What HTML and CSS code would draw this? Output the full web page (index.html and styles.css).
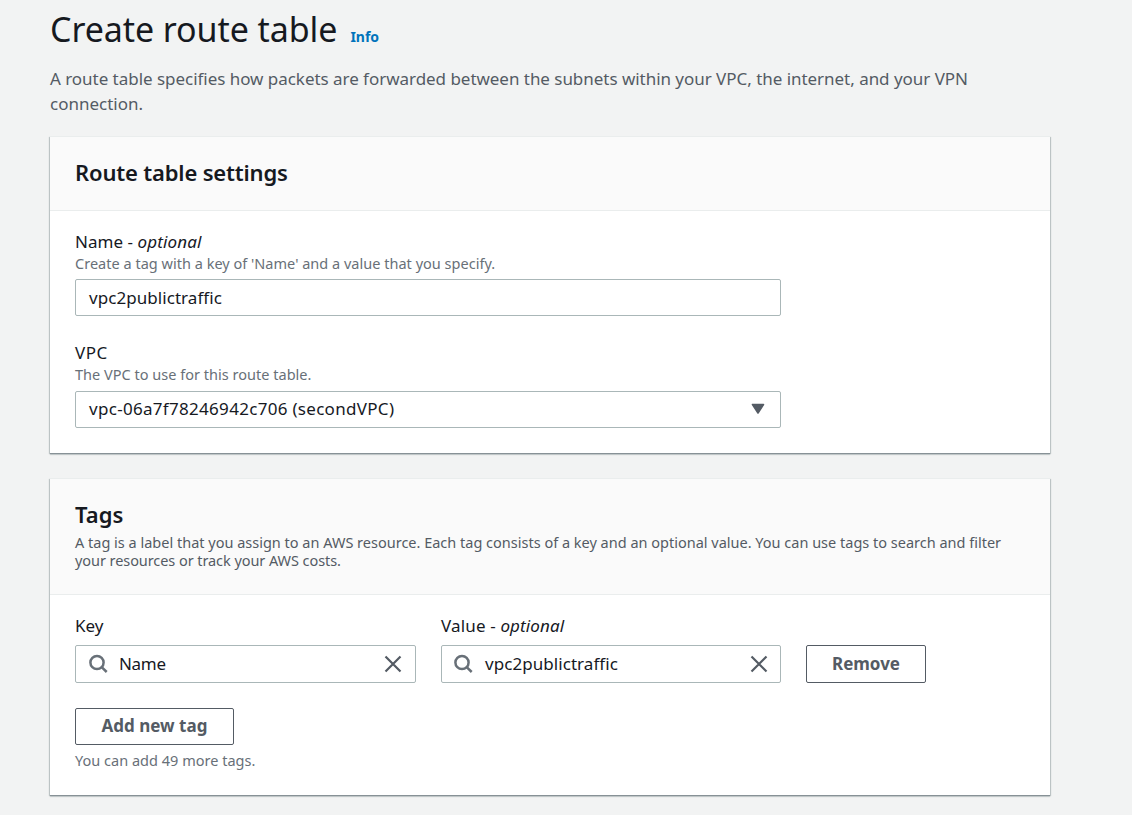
FILE: index.html
```html
<!DOCTYPE html>
<html lang="en">
<head>
<meta charset="utf-8">
<title>Create route table</title>
<link rel="stylesheet" href="styles.css">
</head>
<body>
<main class="page">
  <header class="page-header">
    <div class="title-row"><h1 class="title"><span>Create route table</span></h1><a class="info"><span>Info</span></a></div>
    <p class="intro"><span class="intro-first">A route table specifies how packets are forwarded between the subnets within your VPC, the internet, and your VPN</span><br><span>connection.</span></p>
  </header>

  <section class="card settings">
    <div class="card-header"><h2 class="heading"><span>Route table settings</span></h2></div>
    <div class="card-body">
      <div class="field">
        <label class="label optional"><span>Name - <i>optional</i></span></label>
        <p class="hint"><span>Create a tag with a key of 'Name' and a value that you specify.</span></p>
        <div class="control"><span class="value traffic">vpc2publictraffic</span></div>
      </div>
      <div class="field">
        <label class="label vpc"><span>VPC</span></label>
        <p class="hint"><span>The VPC to use for this route table.</span></p>
        <div class="control select"><span class="value vpc-id">vpc-06a7f78246942c706 (secondVPC)</span>
          <svg class="caret" viewBox="0 0 14 12"><path d="M1.5 1.5h11L7 10z" fill="#545b64" stroke="#545b64" stroke-width="1.6" stroke-linejoin="round"/></svg>
        </div>
      </div>
    </div>
  </section>

  <section class="card tags">
    <div class="card-header">
      <h2 class="heading"><span>Tags</span></h2>
      <p class="description"><span>A tag is a label that you assign to an AWS resource. Each tag consists of a key and an optional value. You can use tags to search and filter</span><br><span class="description-last">your resources or track your AWS costs.</span></p>
    </div>
    <div class="card-body">
      <div class="tag-row">
        <div class="tag-field">
          <label class="label"><span>Key</span></label>
          <div class="control search">
            <svg class="lens" viewBox="0 0 20 20"><circle cx="9" cy="8.5" r="6.6"/><path d="M13.7 13.2l5 4.8"/></svg>
            <span class="value name">Name</span>
            <svg class="clear" viewBox="0 0 18 18"><path d="M1.5 1.5l15 15M16.5 1.5l-15 15"/></svg>
          </div>
        </div>
        <div class="tag-field">
          <label class="label optional tag-value"><span>Value - <i>optional</i></span></label>
          <div class="control search">
            <svg class="lens" viewBox="0 0 20 20"><circle cx="9" cy="8.5" r="6.6"/><path d="M13.7 13.2l5 4.8"/></svg>
            <span class="value traffic">vpc2publictraffic</span>
            <svg class="clear" viewBox="0 0 18 18"><path d="M1.5 1.5l15 15M16.5 1.5l-15 15"/></svg>
          </div>
        </div>
        <button class="button remove"><span>Remove</span></button>
      </div>
      <button class="button add"><span>Add new tag</span></button>
      <p class="hint limit"><span>You can add 49 more tags.</span></p>
    </div>
  </section>
</main>
</body>
</html>
```
FILE: styles.css
```css
* { box-sizing: border-box; margin: 0; padding: 0; }
body { background: #f2f3f3; color: #16191f; font-family: "Noto Sans", sans-serif; font-size: 17px; line-height: 25px; }
.page { width: 1132px; height: 815px; padding: 7px 81px 0 50px; overflow: hidden; white-space: nowrap; }
.page-header { height: 129px; }
.title-row { display: flex; align-items: baseline; gap: 13px; height: 59px; }
.title { font-size: 34px; font-weight: 400; line-height: 44px; letter-spacing: -.08px; }
.info { color: #0073bb; font-size: 14px; font-weight: 700; }
.intro { color: #545b64; }
.intro-first { letter-spacing: -.035px; }

.card { background: #fff; box-shadow: 0 1px 0 0 #879196, 0 2px 1px 0 rgba(0,28,36,.15), 1px 1px 1px 0 rgba(0,28,36,.2), -1px 1px 1px 0 rgba(0,28,36,.2); border-top: 1px solid #eaeded; width: 1000px; }
.settings { height: 317px; margin-bottom: 25px; }
.tags { height: 317px; }
.card-header { background: #fafafa; border-bottom: 1px solid #eaeded; padding: 20px 25px 0; }
.settings .card-header { height: 74px; }
.settings .heading { letter-spacing: -.17px; }
.tags .card-header { height: 116px; }
.heading { font-size: 22px; font-weight: 600; line-height: 31px; }
.description { color: #545b64; font-size: 14.5px; line-height: 18px; margin-top: 3px; }
.description-last { letter-spacing: -.07px; }
.card-body { padding: 18px 25px 0; }
.field { height: 112px; }
.label { display: block; height: 24px; line-height: 25px; }
.optional i { letter-spacing: .12px; }
.optional { letter-spacing: .05px; }
.tag-value { letter-spacing: .15px; }
.vpc { height: 23px; letter-spacing: .5px; }
.hint { color: #687078; font-size: 14.5px; height: 20px; line-height: 20px; letter-spacing: .015px; }
.field .hint { margin-bottom: 6px; }
.field + .field .hint { margin-bottom: 7px; }
.field + .field .label { line-height: 23px; }
.control { display: flex; align-items: center; width: 706px; height: 37px; border: 1px solid #aab7b8; border-radius: 2px; padding: 0 13px; background: #fff; }
.select { padding-bottom: 2px; }
.traffic { letter-spacing: .06px; }
.vpc-id { letter-spacing: .3px; }
.name { letter-spacing: -.3px; }
.caret { width: 14px; height: 12px; margin: 0 2px 0 auto; }
.tag-row { display: flex; align-items: flex-end; gap: 25px; }
.tag-field { width: 341px; }
.tag-field + .tag-field { width: 340px; }
.tag-field .label { height: 32px; }
.search { width: 100%; height: 38px; padding: 0 13px 0 12px; }
.search .value { line-height: 24px; }
.lens { width: 20px; height: 20px; margin-right: 11px; fill: none; stroke: #687078; stroke-width: 2.5; }
.tag-field + .tag-field .lens { margin: 0 12px 0 -1px; }
.clear { width: 18px; height: 18px; margin-left: auto; fill: none; stroke: #545b64; stroke-width: 2.2; }
.tag-field + .tag-field .clear { margin-right: -1px; }
.button { height: 38px; border: 1px solid #545b64; border-radius: 2px; background: #fff; color: #545b64; font: 700 17px/24px "Noto Sans", sans-serif; }
.remove { width: 120px; }
.add { display: block; width: 159px; height: 37px; margin-top: 25px; padding-bottom: 1px; }
.limit { margin-top: 5px; }
```
